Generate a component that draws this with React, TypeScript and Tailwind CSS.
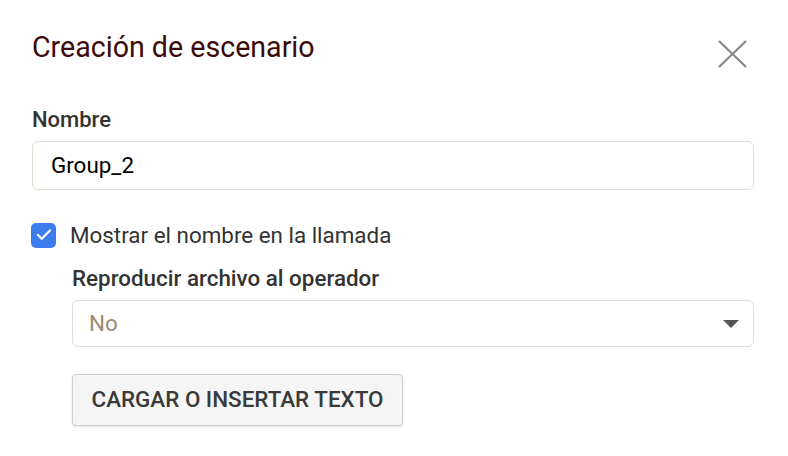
import { Check } from "lucide-react";

const App = () => {
  return (
    <div className="w-[788px] h-[456px] bg-white font-['Roboto',sans-serif] text-[#333]">
      <div className="flex h-[76px] items-start justify-between pl-8 pr-[41px] pt-[30px]">
        <h1 className="text-[28.6px] leading-[34px] text-[#3d0a0a]">Creación de escenario</h1>
        <button className="mt-[10px] text-[#8a8a8a]">
          <svg width="29" height="28" viewBox="0 0 29 28" fill="none" stroke="currentColor" strokeWidth="2.3">
            <path d="M1 1 L28 27 M28 1 L1 27" />
          </svg>
        </button>
      </div>

      <div className="pl-8 pr-[34px]">
        <label className="mt-[31px] block text-[22px] leading-[26px] font-medium">Nombre</label>
        <div className="mt-[8px] flex h-[49px] items-center rounded-md border border-[#e2ddd0] px-[18px] text-[22.4px] text-black">
          Group_2
        </div>

        <div className="mt-[32px] flex h-[26px] items-center gap-[14px]">
          <span className="-ml-[1px] flex h-[25px] w-[25px] items-center justify-center rounded-[5px] bg-[#3d7cec]">
            <Check className="h-[18px] w-[18px] text-white" strokeWidth={3} />
          </span>
          <span className="text-[22.4px] leading-[26px]">Mostrar el nombre en la llamada</span>
        </div>

        <div className="pl-10">
          <label className="mt-[17px] block text-[22.4px] leading-[26px] font-medium">Reproducir archivo al operador</label>
          <div className="mt-[9px] flex h-[47px] items-center justify-between rounded-md border border-[#e2ddd0] pl-[16px] pr-[14px] text-[22.4px] text-[#9b8b74]">
            <span>No</span>
            <span className="h-0 w-0 border-x-[8px] border-t-[8px] border-x-transparent border-t-[#555]" />
          </div>
          <button className="mt-[27px] h-[52px] w-[331px] rounded border border-[#cfcfcf] bg-[#f5f5f5] text-[22.4px] font-medium text-[#3a3a3a] shadow-sm">
            CARGAR O INSERTAR TEXTO
          </button>
        </div>
      </div>
    </div>
  );
};

export default App;
